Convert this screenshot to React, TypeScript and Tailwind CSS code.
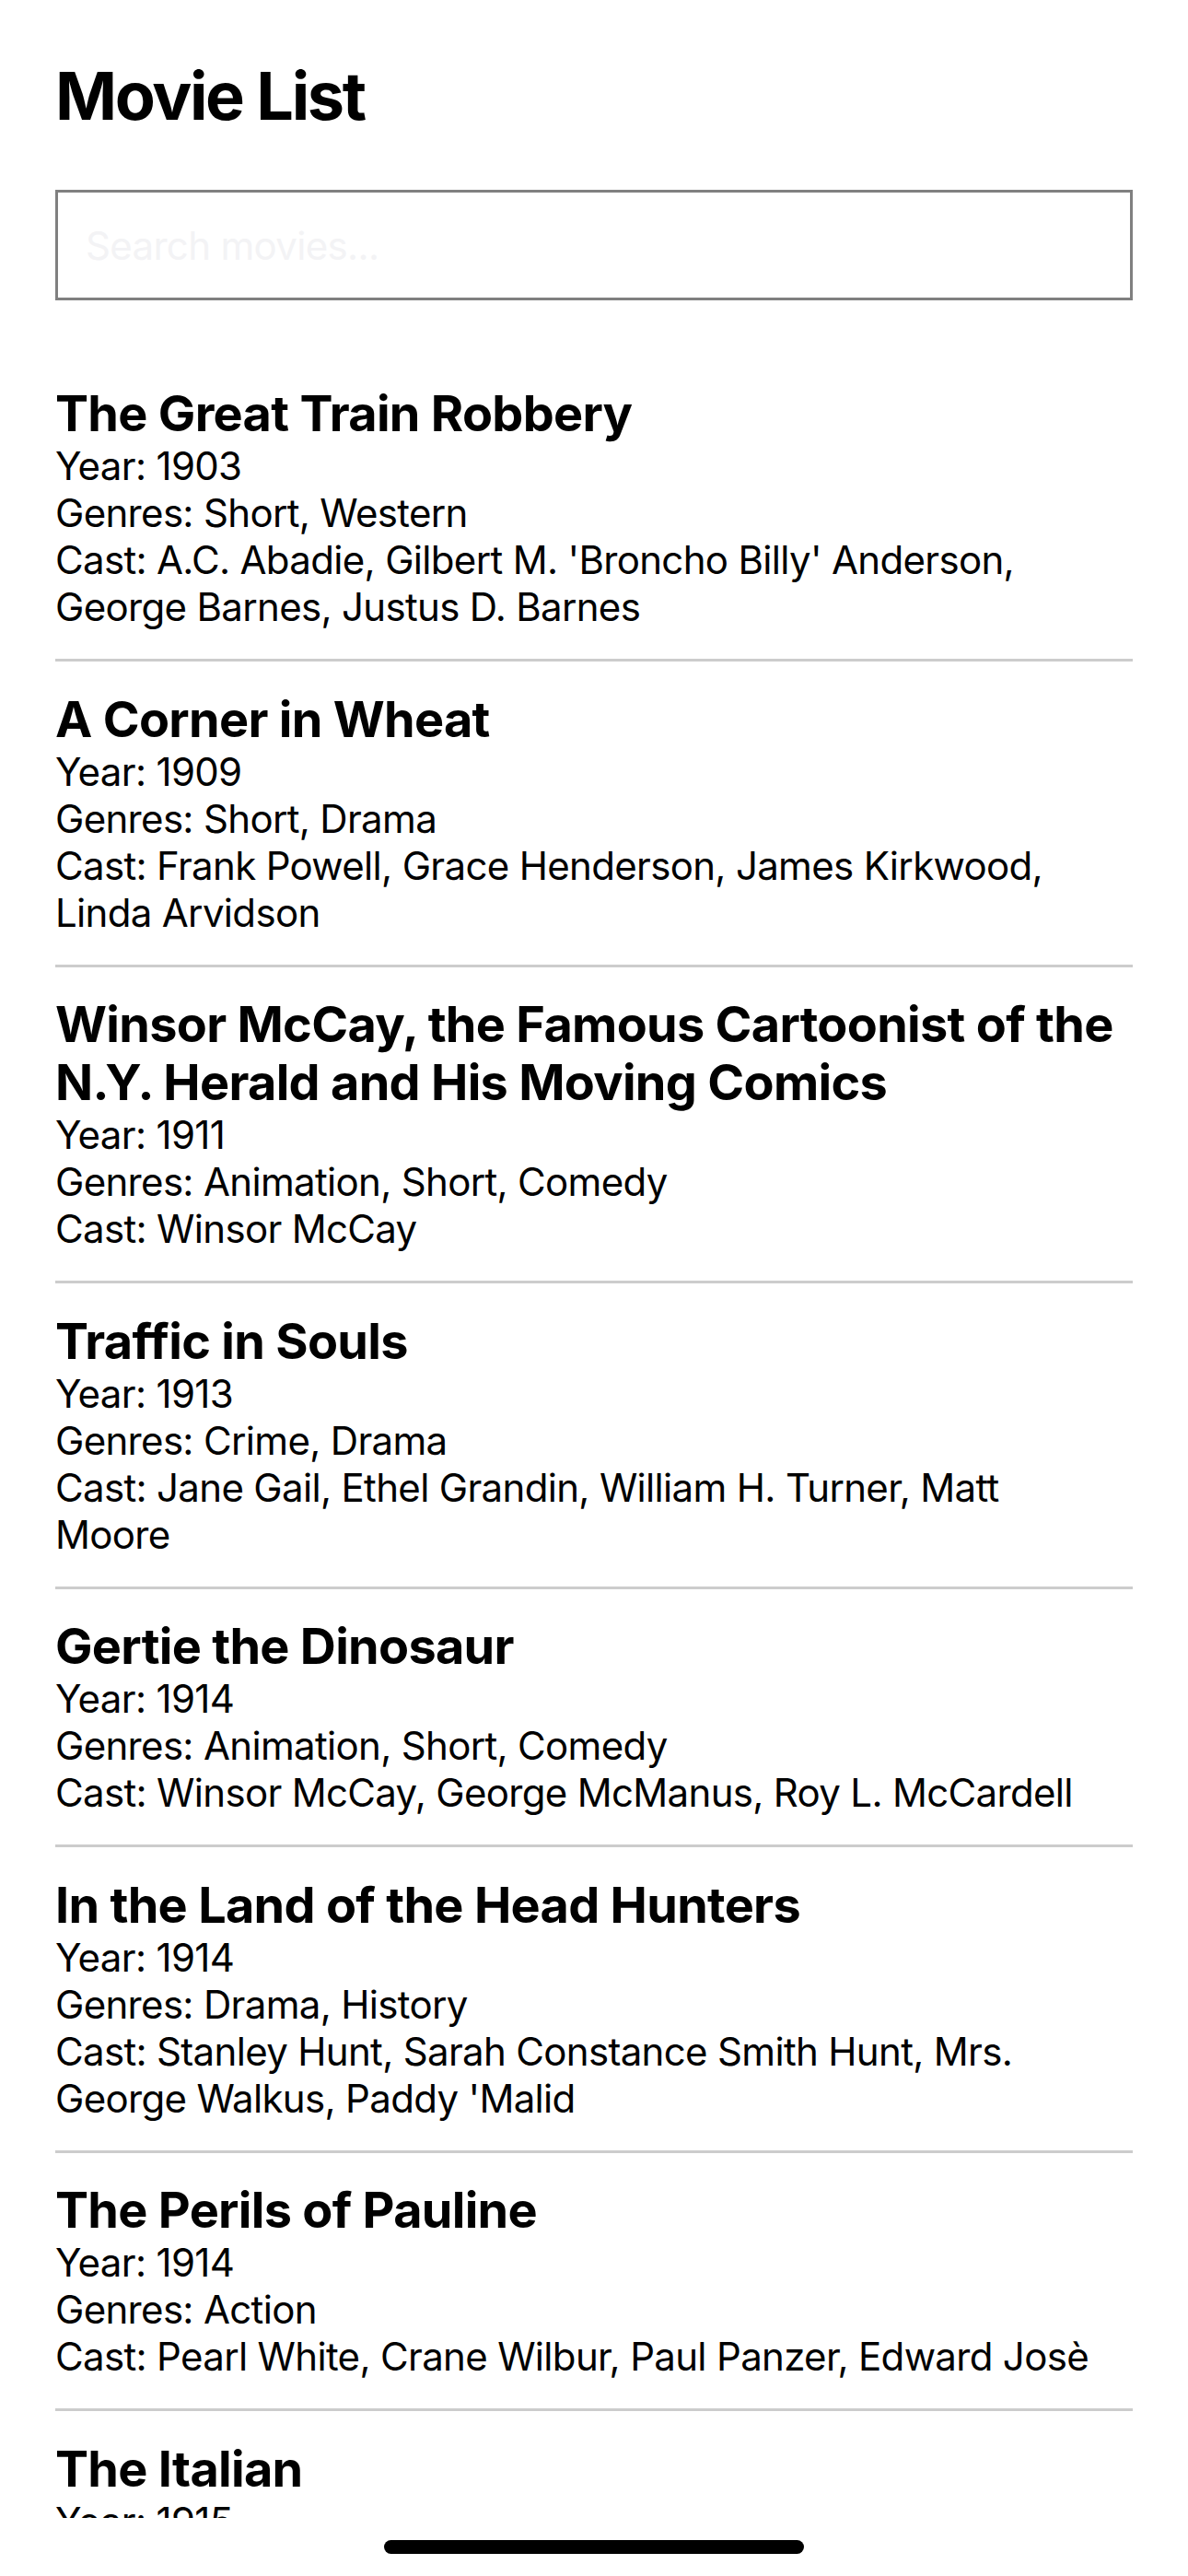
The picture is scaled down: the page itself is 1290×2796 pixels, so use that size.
import React from 'react'

type Movie = {
  title: string
  year: number
  genres: string[]
  cast: string[]
}

const movies: Movie[] = [
  {
    title: 'The Great Train Robbery',
    year: 1903,
    genres: ['Short', 'Western'],
    cast: ['A.C. Abadie', "Gilbert M. 'Broncho Billy' Anderson", 'George Barnes', 'Justus D. Barnes'],
  },
  {
    title: 'A Corner in Wheat',
    year: 1909,
    genres: ['Short', 'Drama'],
    cast: ['Frank Powell', 'Grace Henderson', 'James Kirkwood', 'Linda Arvidson'],
  },
  {
    title: 'Winsor McCay, the Famous Cartoonist of the N.Y. Herald and His Moving Comics',
    year: 1911,
    genres: ['Animation', 'Short', 'Comedy'],
    cast: ['Winsor McCay'],
  },
  {
    title: 'Traffic in Souls',
    year: 1913,
    genres: ['Crime', 'Drama'],
    cast: ['Jane Gail', 'Ethel Grandin', 'William H. Turner', 'Matt Moore'],
  },
  {
    title: 'Gertie the Dinosaur',
    year: 1914,
    genres: ['Animation', 'Short', 'Comedy'],
    cast: ['Winsor McCay', 'George McManus', 'Roy L. McCardell'],
  },
  {
    title: 'In the Land of the Head Hunters',
    year: 1914,
    genres: ['Drama', 'History'],
    cast: ['Stanley Hunt', 'Sarah Constance Smith Hunt', 'Mrs. George Walkus', "Paddy 'Malid"],
  },
  {
    title: 'The Perils of Pauline',
    year: 1914,
    genres: ['Action'],
    cast: ['Pearl White', 'Crane Wilbur', 'Paul Panzer', 'Edward Josè'],
  },
  {
    title: 'The Italian',
    year: 1915,
    genres: ['Drama'],
    cast: ['George Beban', 'Clara Williams', 'J. Frank Burke', 'Leo Willis'],
  },
]

function MovieItem({ movie }: { movie: Movie }) {
  return (
    <div className="py-[30.75px] border-b-[3px] border-[#cccccc]">
      <h2 className="text-[54px] leading-[63px] font-bold tracking-[-0.013em] text-black">{movie.title}</h2>
      <div className="pr-[24px] text-[42px] leading-[51px] tracking-[-0.016em] text-black">
        <p>Year: {movie.year}</p>
        <p>Genres: {movie.genres.join(', ')}</p>
        <p>Cast: {movie.cast.join(', ')}</p>
      </div>
    </div>
  )
}

export default function App() {
  return (
    <div className="h-[2796px] w-[1290px] flex flex-col bg-white font-[Inter,sans-serif] overflow-hidden">
      {/* Scroll area */}
      <div className="flex-1 overflow-hidden px-[60px] pt-[61px]">
        <h1 className="text-[72px] leading-[86px] font-bold tracking-[-0.033em] text-black">Movie List</h1>

        <input
          type="text"
          placeholder="Search movies..."
          className="mt-[59px] w-full h-[120px] border-[3px] border-[#808080] pl-[30px] text-[42px] tracking-[-0.016em] text-black placeholder:text-[#f3f3f5] outline-none"
        />

        <div className="mt-[60.5px]">
          {movies.map((m) => (
            <MovieItem key={m.title} movie={m} />
          ))}
        </div>
      </div>

      {/* Home indicator */}
      <div className="h-[63px] shrink-0 flex justify-center pt-[24px]">
        <div className="w-[456px] h-[15px] rounded-full bg-black" />
      </div>
    </div>
  )
}
